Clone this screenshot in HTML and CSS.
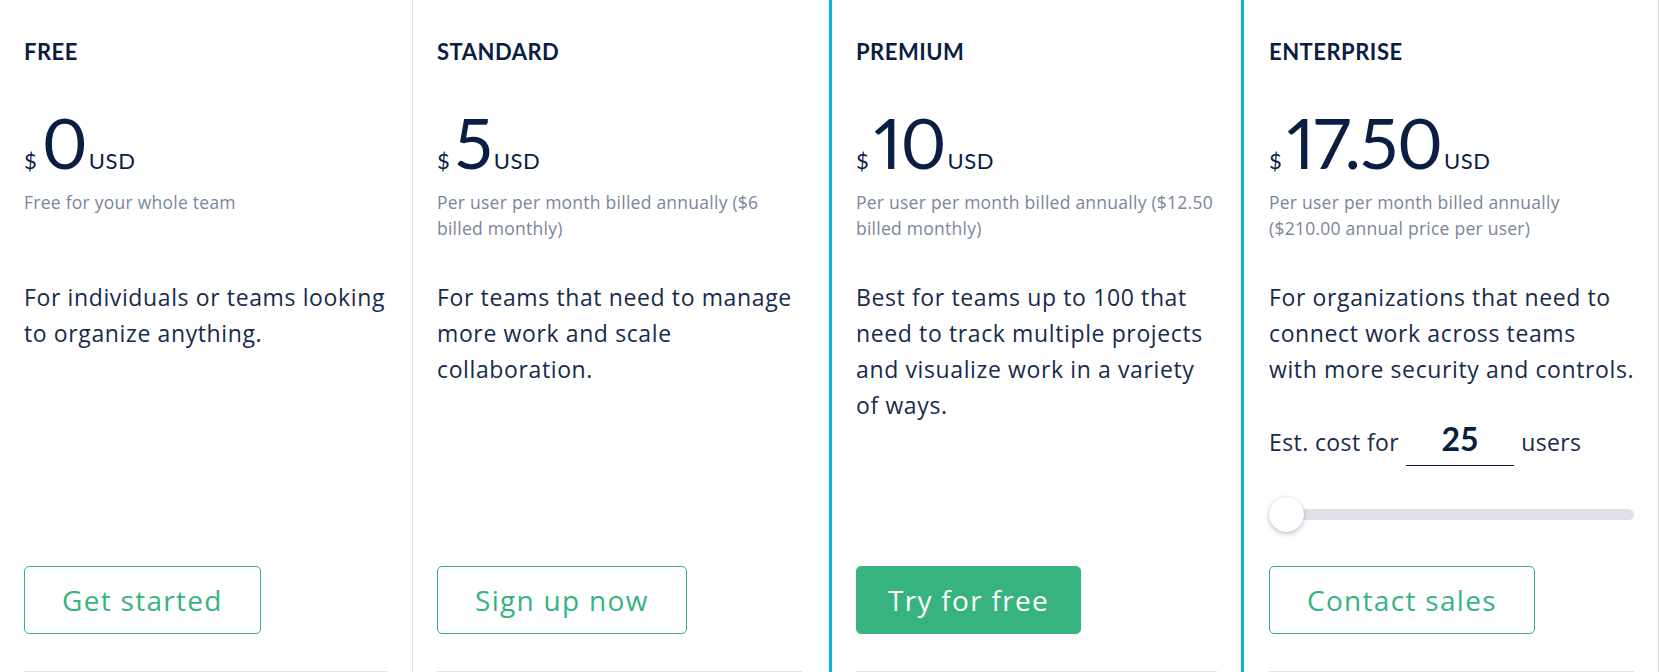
FILE: index.html
```html
<!DOCTYPE html>
<html lang="en">
<head>
<meta charset="utf-8">
<title>Pricing</title>
<link rel="stylesheet" href="styles.css">
</head>
<body>
<main class="plans">
  <section class="plan plan-free">
    <h2 class="plan-name">FREE</h2>
    <div class="price"><span class="cur">$</span><span class="amount">0</span><span class="unit">USD</span></div>
    <p class="billing">Free for your whole team</p>
    <p class="desc">For individuals or teams looking<br>to organize anything.</p>
    <div class="cta"><a class="btn btn-outline">Get started</a></div>
    <hr class="rule">
  </section>
  <section class="plan plan-standard">
    <h2 class="plan-name">STANDARD</h2>
    <div class="price"><span class="cur">$</span><span class="amount">5</span><span class="unit">USD</span></div>
    <p class="billing">Per user per month billed annually ($6<br>billed monthly)</p>
    <p class="desc">For teams that need to manage<br>more work and scale<br>collaboration.</p>
    <div class="cta"><a class="btn btn-outline">Sign up now</a></div>
    <hr class="rule">
  </section>
  <section class="plan plan-premium">
    <h2 class="plan-name">PREMIUM</h2>
    <div class="price"><span class="cur">$</span><span class="amount">10</span><span class="unit">USD</span></div>
    <p class="billing">Per user per month billed annually ($12.50<br>billed monthly)</p>
    <p class="desc">Best for teams up to 100 that<br>need to track multiple projects<br>and visualize work in a variety<br>of ways.</p>
    <div class="cta"><a class="btn btn-solid">Try for free</a></div>
    <hr class="rule">
  </section>
  <section class="plan plan-enterprise">
    <h2 class="plan-name">ENTERPRISE</h2>
    <div class="price"><span class="cur">$</span><span class="amount">17.50</span><span class="unit">USD</span></div>
    <p class="billing">Per user per month billed annually<br>($210.00 annual price per user)</p>
    <p class="desc">For organizations that need to<br>connect work across teams<br>with more security and controls.</p>
    <div class="est">
      <span class="est-label">Est. cost for</span>
      <span class="est-input">25</span>
      <span class="est-label">users</span>
    </div>
    <div class="slider">
      <div class="track"></div>
      <div class="thumb"></div>
    </div>
    <div class="cta"><a class="btn btn-outline">Contact sales</a></div>
    <hr class="rule">
  </section>
</main>
</body>
</html>
```

FILE: styles.css
```css
* { box-sizing: border-box; }

html, body {
  margin: 0;
  padding: 0;
  background: #ffffff;
  overflow: hidden;
}

body {
  font-family: "Open Sans", Lato, "Liberation Sans", sans-serif;
  color: #172b4d;
}

.plans {
  display: grid;
  grid-template-columns: 413px 416px 415px 415px;
  align-items: stretch;
}

.plan {
  display: flex;
  flex-direction: column;
  padding: 38px 24px 60px 24px;
}

.plan-free { border-right: 1px solid #dfe1e6; padding-right: 25px; }
.plan-standard { padding-right: 27px; }
.plan-premium { border-left: 3px solid #00b8d9; border-right: 3px solid #00b8d9; }
.plan-enterprise { border-right: 1px solid #dfe1e6; padding-left: 25px; }

.plan-name {
  margin: 0;
  font-family: Lato, "Open Sans", sans-serif;
  font-size: 22px;
  line-height: 28px;
  font-weight: 700;
  color: #091e42;
  letter-spacing: 0.5px;
}

.price {
  display: flex;
  align-items: baseline;
  margin-top: 41px;
  color: #091e42;
  height: 70px;
  font-family: Lato, "Open Sans", sans-serif;
}

.cur {
  font-size: 22px;
  line-height: 1;
  margin-right: 5px;
}

.amount {
  font-size: 70px;
  line-height: 1;
  font-weight: 400;
  letter-spacing: -1px;
  font-variant-numeric: proportional-nums;
}

.unit {
  font-size: 22px;
  line-height: 1;
  margin-left: 2px;
  letter-spacing: 0.6px;
}

.billing {
  margin: 12px 0 0 0;
  font-size: 17.5px;
  line-height: 26px;
  min-height: 52px;
  color: #7a869a;
  letter-spacing: 0.25px;
  white-space: nowrap;
}

.desc {
  margin: 38px 0 0 0;
  font-size: 23px;
  line-height: 36px;
  color: #172b4d;
  letter-spacing: 0.62px;
  white-space: nowrap;
}

.est {
  display: flex;
  align-items: baseline;
  margin-top: 34px;
}

.est-label {
  font-size: 23px;
  line-height: 36px;
  color: #172b4d;
  letter-spacing: 0.4px;
}

.est-input {
  width: 108px;
  margin: 0 7px;
  font-family: Lato, "Open Sans", sans-serif;
  font-size: 32px;
  line-height: 36px;
  font-weight: 700;
  color: #091e42;
  text-align: center;
  padding-bottom: 8px;
  border-bottom: 1px solid #091e42;
}

.slider {
  position: relative;
  height: 35px;
  margin-top: 31px;
  display: flex;
  align-items: center;
}

.track {
  width: 100%;
  height: 11px;
  border-radius: 6px;
  background: #dfe1e6;
}

.thumb {
  position: absolute;
  left: 0;
  top: 0;
  width: 35px;
  height: 35px;
  border-radius: 50%;
  background: #ffffff;
  box-shadow: 0 2px 5px rgba(9, 30, 66, 0.25), 0 0 1px rgba(9, 30, 66, 0.2);
}

.cta {
  margin-top: auto;
  padding-top: 34px;
  display: flex;
}

.btn {
  display: inline-block;
  height: 68px;
  line-height: 66px;
  padding: 0 37px;
  border: 1px solid #36b37e;
  border-radius: 5px;
  font-size: 28px;
  color: #36b37e;
  text-decoration: none;
  letter-spacing: 1.3px;
  white-space: nowrap;
}

.btn-solid {
  padding: 0 31px;
  background: #36b37e;
  color: #ffffff;
}

.rule {
  margin: 37px 0 0 0;
  border: 0;
  height: 2px;
  background: #dfe1e6;
}
```
